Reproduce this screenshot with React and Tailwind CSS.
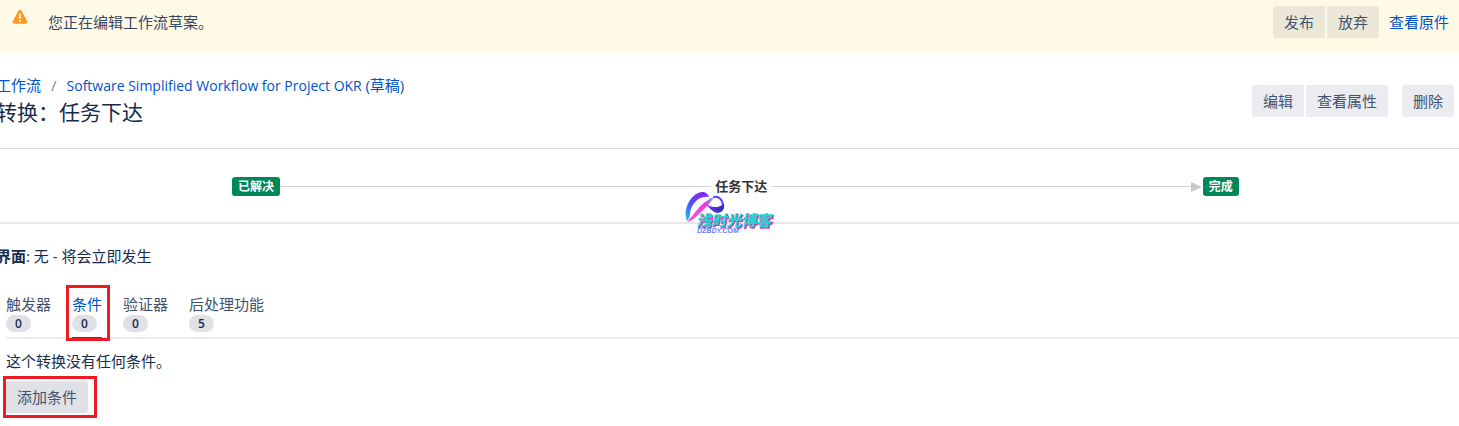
import { clsx } from 'clsx';

const tabs = [
  { label: '触发器', count: 0 },
  { label: '条件', count: 0, active: true },
  { label: '验证器', count: 0 },
  { label: '后处理功能', count: 5 },
];

function Button({ children, className }) {
  return (
    <button type="button" className={clsx('h-8 px-[11px] text-[15px] text-[#42526e]', className)}>
      {children}
    </button>
  );
}

function Status({ children }) {
  return (
    <span className="rounded-[3px] bg-[#00875a] px-[6px] text-[12px] leading-[19px] font-bold text-white">
      {children}
    </span>
  );
}

function DraftBanner() {
  return (
    <div className="flex h-[53px] items-start bg-[#fffae6] pt-[6px] pr-[10px] pl-[12px]">
      <svg viewBox="0 0 16 16" className="mt-[3px] h-4 w-4" aria-hidden="true">
        <path
          d="M6.3 1.900.9 12.200c-.6 1.200.2 2.500 1.500 2.500h11.200c1.300 0 2.100-1.300 1.500-2.500L9.700 1.900C9 .6 7 .6 6.300 1.900z"
          fill="#ff991f"
        />
        <path d="M8 5.500v3.600" stroke="#fffae6" strokeWidth="1.800" strokeLinecap="round" />
        <circle cx="8" cy="12" r="1.100" fill="#fffae6" />
      </svg>
      <p className="ml-5 flex-1 leading-8 text-[#344563]">您正在编辑工作流草案。</p>
      <div className="flex items-center gap-[2px]">
        <Button className="rounded-l-[3px] bg-[#ebe8d8]">发布</Button>
        <Button className="rounded-r-[3px] bg-[#ebe8d8]">放弃</Button>
        <a href="#original" className="ml-2 text-[#0052cc]">查看原件</a>
      </div>
    </div>
  );
}

function PageHeader() {
  return (
    <header className="-ml-1 flex items-start justify-between pt-[21px] pr-[5px]">
      <div>
        <nav className="flex gap-[10px] leading-[22px]">
          <a href="#workflows" className="text-[#0052cc]">工作流</a>
          <span className="text-[#7a869a]">/</span>
          <a href="#workflow" className="text-[14px] text-[#0052cc]">
            Software Simplified Workflow for Project OKR <span className="text-[15px]">(草稿)</span>
          </a>
        </nav>
        <h1 className="text-[21px] leading-[30px] text-[#172b4d]">转换：任务下达</h1>
      </div>
      <div className="flex gap-[2px] pt-[11px]">
        <Button className="rounded-l-[3px] bg-[#ebecf0]">编辑</Button>
        <Button className="rounded-r-[3px] bg-[#ebecf0]">查看属性</Button>
        <Button className="ml-3 rounded-[3px] bg-[#ebecf0]">删除</Button>
      </div>
    </header>
  );
}

function BlogMark() {
  return (
    <svg viewBox="0 0 92 46" className="absolute top-[41px] left-1/2 h-[46px] w-[92px] -translate-x-[46px]">
      <defs>
        <linearGradient id="loop" x1="0" y1="1" x2="1" y2="0">
          <stop offset="0" stopColor="#25c4ff" />
          <stop offset="0.4" stopColor="#4a58fa" />
          <stop offset="0.75" stopColor="#8a2cf0" />
          <stop offset="1" stopColor="#5a3cf0" />
        </linearGradient>
        <linearGradient id="cross" x1="0" y1="1" x2="1" y2="0">
          <stop offset="0" stopColor="#ff4fe0" />
          <stop offset="0.7" stopColor="#f03ae0" />
          <stop offset="1" stopColor="#45b8ff" />
        </linearGradient>
        <linearGradient id="tail" x1="0" y1="0" x2="1" y2="0">
          <stop offset="0" stopColor="#7a35f0" />
          <stop offset="1" stopColor="#2a2fb0" />
        </linearGradient>
      </defs>
      <path d="M3 31C-2 20 7 3 18 2c4 0 6 2 7 5C14 5 7 15 6 23c0 3-1 6-3 8z" fill="url(#loop)" />
      <path d="M3 32C11 24 16 12 30 7c-4 7-9 11-14 16-4 4-8 8-13 9z" fill="url(#cross)" />
      <path d="M30 7c5-1 9 3 9 9" fill="none" stroke="#5b3ff0" strokeWidth="2" strokeLinecap="round" />
      <path d="M22 14c5 3 11 5 18 0 1 5-2 9-7 9-4-1-8-5-11-9z" fill="url(#tail)" />
      <g transform="skewX(-10)" fontFamily="'Noto Sans CJK SC', sans-serif" fontSize="15" fontWeight="700">
        <text x="20" y="37" fill="#f02fb0" stroke="#f02fb0">浅时光博客</text>
        <text x="19" y="36" fill="#18dcd4" stroke="#18dcd4" strokeWidth="0.3">浅时光博客</text>
      </g>
      <text x="13" y="43" fontSize="7" fontStyle="italic" fontWeight="700" fill="#6b7bff" fontFamily="'Liberation Sans', sans-serif">
        DZBDY.COM
      </text>
    </svg>
  );
}

function TransitionDiagram() {
  return (
    <section className="relative mt-[21px] flex h-[76px] items-center border-t border-b-2 border-t-[#dcdcdc] border-b-[#e8e8e8] pt-[2px] pr-[15.1%] pl-[15.9%]">
      <Status>已解决</Status>
      <div className="h-px flex-1 bg-[#d4d4d4]" />
      <span className="px-1 text-[13px] font-bold text-[#333]">任务下达</span>
      <div className="flex flex-1 items-center">
        <div className="h-px flex-1 bg-[#d4d4d4]" />
        <svg viewBox="0 0 12 10" className="h-[10px] w-3" aria-hidden="true">
          <path d="M0 0 11 5 0 10z" fill="#c8c8c8" />
        </svg>
      </div>
      <Status>完成</Status>
      <BlogMark />
    </section>
  );
}

function Tabs() {
  return (
    <div role="tablist" className="mt-[26px] ml-[6px] flex gap-[21px] border-b-2 border-[#ebecf0]">
      {tabs.map(({ label, count, active }) => (
        <button
          key={label}
          type="button"
          role="tab"
          aria-selected={Boolean(active)}
          className={clsx(
            'relative -mb-[2px] flex flex-col items-start border-b-2 pb-[5px]',
            active ? 'border-[#0052cc] text-[#0052cc]' : 'border-transparent text-[#42526e]',
          )}
        >
          <span className="leading-[22px]">{label}</span>
          <span className="w-[25px] rounded-full bg-[#dfe1e6] text-center text-[12px] leading-[17px] font-semibold text-[#172b4d]">
            {count}
          </span>
          {active && <span className="absolute -top-2 -right-2 -bottom-1 -left-[6px] border-3 border-[#ed1c24]" />}
        </button>
      ))}
    </div>
  );
}

export default function App() {
  return (
    <main className="overflow-hidden bg-white pb-[13px] font-['Open_Sans','Noto_Sans_CJK_SC',sans-serif] text-[15px] text-[#172b4d]">
      <DraftBanner />
      <PageHeader />
      <TransitionDiagram />
      <p className="mt-[21px] -ml-1 leading-[22px]">
        <strong>界面</strong>: 无 - 将会立即发生
      </p>
      <Tabs />
      <section className="ml-[6px]">
        <p className="mt-[11px] leading-[22px]">这个转换没有任何条件。</p>
        <div className="relative mt-[9px] inline-flex">
          <Button className="rounded-[3px] bg-[#dfe1e6]">添加条件</Button>
          <span className="absolute -top-[5px] -right-[9px] -bottom-[5px] -left-[3px] border-3 border-[#ed1c24]" />
        </div>
      </section>
    </main>
  );
}
